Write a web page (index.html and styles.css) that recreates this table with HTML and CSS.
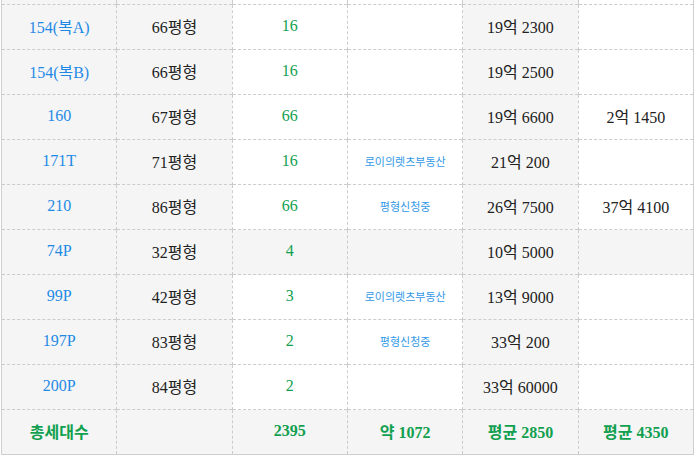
FILE: index.html
```html
<!DOCTYPE html>
<html lang="ko">
<head>
<meta charset="utf-8">
<link rel="stylesheet" href="styles.css">
</head>
<body>
<table class="price-table">
  <colgroup>
    <col class="c-grey"><col class="c-grey"><col><col><col class="c-grey"><col>
  </colgroup>
  <tbody>
    <tr class="stub"><td></td><td></td><td></td><td></td><td></td><td></td></tr>
    <tr><td class="type">154(복A)</td><td class="area">66평형</td><td class="cnt">16</td><td class="agent"></td><td class="price">19억 2300</td><td class="price"></td></tr>
    <tr><td class="type">154(복B)</td><td class="area">66평형</td><td class="cnt">16</td><td class="agent"></td><td class="price">19억 2500</td><td class="price"></td></tr>
    <tr><td class="type">160</td><td class="area">67평형</td><td class="cnt">66</td><td class="agent"></td><td class="price">19억 6600</td><td class="price">2억 1450</td></tr>
    <tr><td class="type">171T</td><td class="area">71평형</td><td class="cnt">16</td><td class="agent">로이의렛츠부동산</td><td class="price">21억 200</td><td class="price"></td></tr>
    <tr><td class="type">210</td><td class="area">86평형</td><td class="cnt">66</td><td class="agent">평형신청중</td><td class="price">26억 7500</td><td class="price">37억 4100</td></tr>
    <tr class="row-grey"><td class="type">74P</td><td class="area">32평형</td><td class="cnt">4</td><td class="agent"></td><td class="price">10억 5000</td><td class="price"></td></tr>
    <tr><td class="type">99P</td><td class="area">42평형</td><td class="cnt">3</td><td class="agent">로이의렛츠부동산</td><td class="price">13억 9000</td><td class="price"></td></tr>
    <tr><td class="type">197P</td><td class="area">83평형</td><td class="cnt">2</td><td class="agent">평형신청중</td><td class="price">33억 200</td><td class="price"></td></tr>
    <tr><td class="type">200P</td><td class="area">84평형</td><td class="cnt">2</td><td class="agent"></td><td class="price">33억 60000</td><td class="price"></td></tr>
    <tr class="row-grey total"><td>총세대수</td><td></td><td>2395</td><td>약 1072</td><td>평균 2850</td><td>평균 4350</td></tr>
  </tbody>
</table>
</body>
</html>
```

FILE: styles.css
```css
html, body {
  margin: 0;
  padding: 0;
  background: #ffffff;
}
body {
  padding-left: 1px;
  font-family: "Liberation Serif", "Noto Sans CJK KR", serif;
}
.price-table {
  width: 693px;
  border-collapse: collapse;
  table-layout: fixed;
  border-left: 1px solid #cfcfcf;
  border-right: 1px solid #cfcfcf;
  border-bottom: 1px solid #cfcfcf;
}
.c-grey {
  background: #f5f5f5;
}
.price-table td {
  height: 42px;
  padding: 0 0 2px;
  text-align: center;
  vertical-align: middle;
  border-top: 1px dashed #cccccc;
  border-left: 1px dashed #cccccc;
  font-size: 16px;
  color: #222222;
  white-space: nowrap;
}
.price-table td:first-child {
  border-left: 1px solid #cfcfcf;
}
.price-table tr.stub td {
  height: 4px;
  padding: 0;
  border-top: none;
}
.row-grey td {
  background: #f5f5f5;
}
.type {
  color: #1f8ae6 !important;
}
.cnt {
  color: #11a04f !important;
}
.agent {
  font-family: "Noto Sans CJK KR", sans-serif;
  font-size: 11px !important;
  color: #3399e6 !important;
}
.total td {
  color: #11a04f;
  font-weight: bold;
  font-family: "Liberation Serif", "Noto Sans CJK KR", serif;
}
```
